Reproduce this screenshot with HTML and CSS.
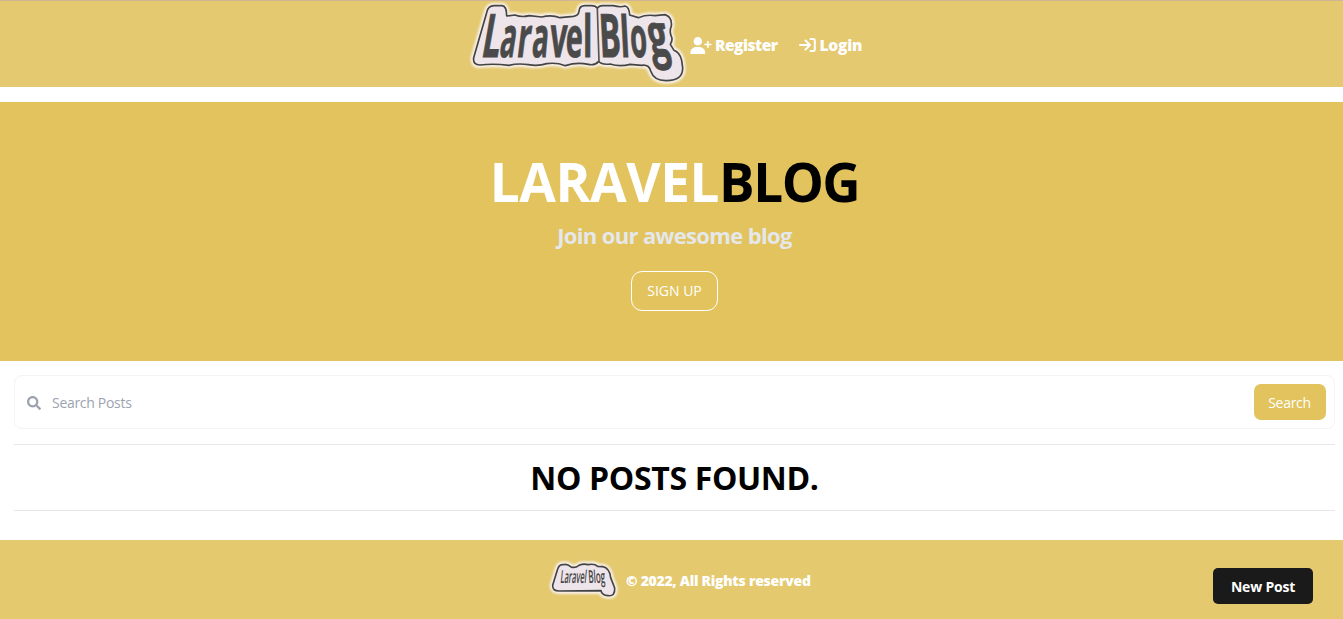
FILE: index.html
```
<!DOCTYPE html>
<html lang="en">
<head>
<meta charset="utf-8">
<title>Laravel Blog</title>
<link rel="stylesheet" href="styles.css">
</head>
<body>
<header class="topbar">
  <svg class="logo" viewBox="0 0 720 258">
    <path class="halo" d="M80 35Q84 14 102 14H126Q140 15 140 45L165 42Q185 50 208 44L245 48Q275 40 300 50L340 46Q355 44 357 31Q358 14 375 14H395Q407 14 412 22Q418 13 430 14H460Q482 20 495 15Q508 18 509 42L535 50Q560 40 585 44L615 41Q637 48 634 75Q628 90 633 104Q640 116 631 130L642 148Q660 155 665 178L668 200Q669 239 620 239Q582 240 572 210Q567 190 545 193L510 190Q480 198 450 189Q425 192 416 181Q404 195 385 190Q350 183 316 194Q290 184 260 188Q235 196 205 191Q175 186 147 193Q100 187 60 192Q38 192 41 170Z"/>
    <path class="badge" d="M80 35Q84 14 102 14H126Q140 15 140 45L165 42Q185 50 208 44L245 48Q275 40 300 50L340 46Q355 44 357 31Q358 14 375 14H395Q407 14 412 22Q418 13 430 14H460Q482 20 495 15Q508 18 509 42L535 50Q560 40 585 44L615 41Q637 48 634 75Q628 90 633 104Q640 116 631 130L642 148Q660 155 665 178L668 200Q669 239 620 239Q582 240 572 210Q567 190 545 193L510 190Q480 198 450 189Q425 192 416 181Q404 195 385 190Q350 183 316 194Q290 184 260 188Q235 196 205 191Q175 186 147 193Q100 187 60 192Q38 192 41 170Z"/>
    <path class="seam" d="M412 24L417 182"/>
    <g class="lettering">
      <text transform="translate(60 167) skewX(-10) scale(.98 1.8)">L</text>
      <text transform="translate(115 167) skewX(-9) scale(.79 1.68)">a</text>
      <text transform="translate(167 167) skewX(-7) scale(.88 1.68)">r</text>
      <text transform="translate(213 167) skewX(-5) scale(.82 1.68)">a</text>
      <text transform="translate(268 167) skewX(-3) scale(.89 1.72)">v</text>
      <text transform="translate(316 167) skewX(-2) scale(.86 1.68)">e</text>
      <text transform="translate(369 167) scale(.92 1.7)">l</text>
      <text transform="translate(421 167) skewX(3) scale(.96 1.8)">B</text>
      <text transform="translate(484 167) skewX(3) scale(.9 1.7)">l</text>
      <text transform="translate(514 167) skewX(4) scale(.82 1.68)">o</text>
      <text transform="translate(575 165) skewX(12) scale(1.04 1.78)">g</text>
    </g>
  </svg>
  <nav class="nav">
    <a class="nav-link register"><svg class="icon-user" viewBox="0 0 640 512"><path d="M224 256A128 128 0 1 0 224 0a128 128 0 1 0 0 256zm-46 48C80 304 0 384 0 482c0 17 13 30 30 30h388c17 0 30-13 30-30 0-98-80-178-178-178zM504 312v-64h-64a24 24 0 0 1 0-48h64v-64a24 24 0 0 1 48 0v64h64a24 24 0 0 1 0 48h-64v64a24 24 0 0 1-48 0z"/></svg><span>Register</span></a>
    <a class="nav-link login"><svg class="icon-login" viewBox="0 0 17 16"><path d="M1 8h9.5M6.500 3.500L11 8l-4.500 4.500M11.500 2H14q1.800 0 1.800 1.800v8.400Q15.800 14 14 14h-2.500"/></svg><span>Login</span></a>
  </nav>
</header>

<section class="hero">
  <h1 class="hero-title">LARAVEL<span class="dark">BLOG</span></h1>
  <p class="hero-sub">Join our awesome blog</p>
  <a class="signup">SIGN UP</a>
</section>

<main class="content">
  <form class="search">
    <svg class="icon-search" viewBox="0 0 512 512"><path d="M505 442.700L405.300 343c-4.500-4.500-10.600-7-17-7H372c27.600-35.300 44-79.700 44-128C416 93.100 322.900 0 208 0S0 93.100 0 208s93.100 208 208 208c48.300 0 92.700-16.400 128-44v16.300c0 6.400 2.500 12.500 7 17l99.700 99.700c9.400 9.400 24.600 9.400 33.900 0l28.300-28.300c9.400-9.400 9.400-24.600.1-34zM208 336c-70.700 0-128-57.200-128-128 0-70.700 57.200-128 128-128 70.700 0 128 57.200 128 128 0 70.700-57.200 128-128 128z"/></svg>
    <span class="placeholder">Search Posts</span>
    <span class="search-btn">Search</span>
  </form>
  <div class="empty"><h2 class="empty-title">NO POSTS FOUND.</h2></div>
</main>

<footer class="footer">
  <svg class="logo-small" viewBox="0 0 216 129">
    <g transform="translate(4 3)">
      <path class="halo" d="M33 42Q38 24 50 26Q62 22 73 32Q85 38 98 28Q112 22 125 26Q145 22 154 31L169 32Q190 36 193 65L205 96Q207 122 185 119Q166 118 164 104L40 105Q18 106 19 88Z"/>
      <path class="badge" d="M33 42Q38 24 50 26Q62 22 73 32Q85 38 98 28Q112 22 125 26Q145 22 154 31L169 32Q190 36 193 65L205 96Q207 122 185 119Q166 118 164 104L40 105Q18 106 19 88Z"/>
    </g>
    <g class="small-lettering">
      <text transform="translate(45 84) skewX(-6) scale(.465 1.12)">Laravel</text>
      <text transform="translate(131 84) skewX(4) scale(.5 1.12)">Blog</text>
    </g>
  </svg>
  <p class="copyright">© 2022, All Rights reserved</p>
  <a class="new-post">New Post</a>
</footer>
</body>
</html>
```
FILE: styles.css
```
* { box-sizing: border-box; }
body {
  margin: 0;
  height: 619px;
  display: flex;
  flex-direction: column;
  overflow: hidden;
  background: #fff;
  color: #000;
  font-family: "Open Sans", "Noto Sans", sans-serif;
}
h1, h2, p { margin: 0; }
span, a, h1, h2, p { white-space: nowrap; }

.topbar {
  height: 87px;
  padding-left: 460px;
  display: flex;
  align-items: flex-start;
  background: #e4c970;
  border-top: 1px solid #d1b496;
}
.logo { width: 240px; height: 86px; flex: none; overflow: visible; }
.halo { fill: #f8f0e8; stroke: #f8f0e8; stroke-width: 18; stroke-linejoin: round; filter: blur(3px); }
.badge { fill: #eee5eb; stroke: #444; stroke-width: 5; stroke-linejoin: round; }
.seam { fill: none; stroke: #555; stroke-width: 5; }
.lettering { fill: #4a4a4a; stroke: #4a4a4a; stroke-width: 1.500; font-weight: 700; font-size: 100px; }
.nav { display: flex; height: 86px; align-items: center; margin-left: -10px; padding-top: 2px; gap: 21px; }
.nav-link { display: flex; align-items: center; color: #fff; font-size: 15.500px; font-weight: 800; line-height: 24px; }
.register span { letter-spacing: -0.5px; }
.login span { letter-spacing: -0.200px; }
.icon-user { width: 22px; height: 17px; margin-right: 3px; fill: #fff; }
.icon-login { width: 17px; height: 16px; margin-right: 4px; fill: none; stroke: #fff; stroke-width: 2; stroke-linecap: round; stroke-linejoin: round; }

.hero {
  height: 259px;
  margin-top: 15px;
  padding: 44px 0 0 6px;
  display: flex;
  flex-direction: column;
  align-items: center;
  background: #e2c35d;
}
.hero-title { color: #fff; font-size: 53px; font-weight: 700; line-height: 72px; letter-spacing: -0.4px; }
.dark { color: #000; letter-spacing: -1.500px; }
.hero-sub { margin-top: 2px; color: #e5e7eb; font-size: 22px; font-weight: 700; line-height: 30px; letter-spacing: -0.65px; }
.signup {
  width: 87px;
  height: 40px;
  margin-top: 21px;
  border: 1px solid #fff;
  border-radius: 11px;
  color: #fff;
  font-size: 14px;
  line-height: 38px;
  text-align: center;
}

.content { height: 179px; padding: 14px 8px 0 14px; }
.search {
  height: 54px;
  padding: 0 8px 0 12px;
  display: flex;
  align-items: center;
  border: 1px solid #f3f4f6;
  border-radius: 8px;
}
.icon-search { width: 14px; height: 14px; margin-top: 1px; fill: #9ca3af; }
.placeholder { margin-left: 11px; flex: 1; color: #9ca3af; font-size: 14px; letter-spacing: -0.300px; }
.search-btn {
  width: 72px;
  height: 36px;
  padding-right: 1px;
  border-radius: 7px;
  background: #e2c35d;
  color: #fff;
  font-size: 14px;
  line-height: 37px;
  letter-spacing: -0.300px;
  text-align: center;
}
.empty {
  height: 67px;
  margin-top: 15px;
  border-top: 1px solid #e5e7eb;
  border-bottom: 1px solid #e5e7eb;
  text-align: center;
}
.empty-title { font-size: 32px; font-weight: 700; line-height: 65px; letter-spacing: -0.350px; }

.footer {
  position: relative;
  height: 79px;
  padding: 14px 0 0 545px;
  display: flex;
  background: #e4c96f;
}
.logo-small { width: 72px; height: 43px; margin: 1px 0 0; flex: none; overflow: visible; }
.small-lettering { fill: #444; font-weight: 600; font-size: 48px; }
.copyright { margin-left: 9px; color: #fff; font-size: 14px; font-weight: 800; line-height: 53px; letter-spacing: -0.270px; }
.new-post {
  position: absolute;
  right: 30px;
  bottom: 15px;
  width: 100px;
  height: 36px;
  border-radius: 5px;
  background: #1a1a1a;
  color: #fff;
  font-size: 14px;
  font-weight: 700;
  line-height: 38px;
  letter-spacing: -0.2px;
  text-align: center;
}
```
